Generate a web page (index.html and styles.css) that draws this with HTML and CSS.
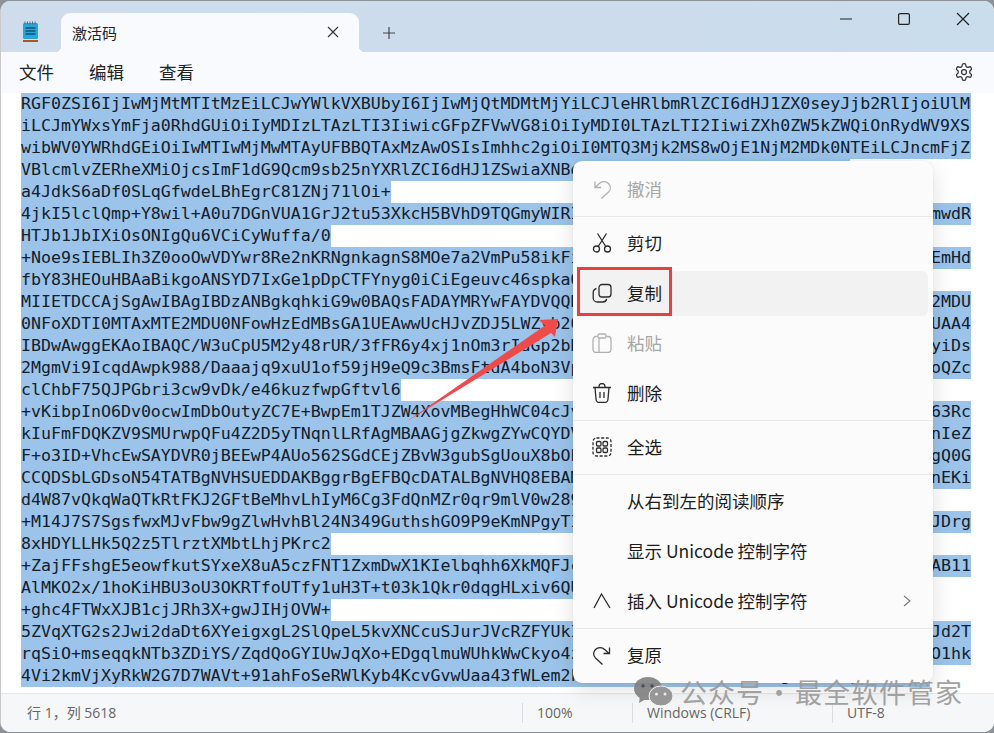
FILE: index.html
```html
<!DOCTYPE html>
<html lang="zh-CN">
<head>
<meta charset="utf-8">
<title>激活码 - 记事本</title>
<link rel="stylesheet" href="styles.css">
</head>
<body>
<div class="window">
  <header class="titlebar">
    <div class="appicon">
      <svg width="20" height="24" viewBox="0 0 20 24"><rect x="2" y="3" width="15" height="16" rx="1.5" fill="#2aa5d8"/><path d="M4 1.5v3M6.5 1.5v3M9 1.5v3M11.5 1.5v3M14 1.5v3" stroke="#3d6f8f" stroke-width="1"/><path d="M4.5 8h10M4.5 11h10M4.5 14h10" stroke="#0f5478" stroke-width="1.4"/><rect x="2" y="20" width="15" height="2" fill="#b0531d"/></svg>
    </div>
    <div class="tab">
      <span class="tabtitle">激活码</span>
      <svg class="tabclose" width="12" height="12" viewBox="0 0 12 12"><path d="M1 1l10 10M11 1L1 11" stroke="#333" stroke-width="1.1"/></svg>
    </div>
    <div class="newtab">
      <svg width="14" height="14" viewBox="0 0 14 14"><path d="M7 1v12M1 7h12" stroke="#444" stroke-width="1.2"/></svg>
    </div>
    <div class="controls">
      <div class="ctl"><svg width="14" height="14" viewBox="0 0 14 14"><path d="M1 7h12" stroke="#222" stroke-width="1.2"/></svg></div>
      <div class="ctl"><svg width="14" height="14" viewBox="0 0 14 14"><rect x="1.6" y="1.6" width="10.8" height="10.8" rx="1.5" fill="none" stroke="#222" stroke-width="1.2"/></svg></div>
      <div class="ctl"><svg width="14" height="14" viewBox="0 0 14 14"><path d="M1 1l12 12M13 1L1 13" stroke="#222" stroke-width="1.2"/></svg></div>
    </div>
  </header>
  <nav class="toolbar">
    <span class="menuname">文件</span>
    <span class="menuname">编辑</span>
    <span class="menuname">查看</span>
    <svg class="gear" width="20" height="20" viewBox="0 0 24 24" fill="none" stroke="#333" stroke-width="1.5"><path d="M12.22 2h-.44a2 2 0 0 0-2 2v.18a2 2 0 0 1-1 1.73l-.43.25a2 2 0 0 1-2 0l-.15-.08a2 2 0 0 0-2.73.73l-.22.38a2 2 0 0 0 .73 2.73l.15.1a2 2 0 0 1 1 1.72v.51a2 2 0 0 1-1 1.74l-.15.09a2 2 0 0 0-.73 2.73l.22.38a2 2 0 0 0 2.73.73l.15-.08a2 2 0 0 1 2 0l.43.25a2 2 0 0 1 1 1.73V20a2 2 0 0 0 2 2h.44a2 2 0 0 0 2-2v-.18a2 2 0 0 1 1-1.73l.43-.25a2 2 0 0 1 2 0l.15.08a2 2 0 0 0 2.73-.73l.22-.39a2 2 0 0 0-.73-2.73l-.15-.08a2 2 0 0 1-1-1.74v-.5a2 2 0 0 1 1-1.74l.15-.09a2 2 0 0 0 .73-2.73l-.22-.38a2 2 0 0 0-2.73-.73l-.15.08a2 2 0 0 1-2 0l-.43-.25a2 2 0 0 1-1-1.73V4a2 2 0 0 0-2-2z"/><circle cx="12" cy="12" r="3"/></svg>
  </nav>
  <main class="editor">
    <div class="line full"><span>RGF0ZSI6IjIwMjMtMTItMzEiLCJwYWlkVXBUbyI6IjIwMjQtMDMtMjYiLCJleHRlbmRlZCI6dHJ1ZX0seyJjb2RlIjoiUlM</span></div>
    <div class="line full"><span>iLCJmYWxsYmFja0RhdGUiOiIyMDIzLTAzLTI3IiwicGFpZFVwVG8iOiIyMDI0LTAzLTI2IiwiZXh0ZW5kZWQiOnRydWV9XS</span></div>
    <div class="line full"><span>wibWV0YWRhdGEiOiIwMTIwMjMwMTAyUFBBQTAxMzAwOSIsImhhc2giOiI0MTQ3Mjk2MS8wOjE1NjM2MDk0NTEiLCJncmFjZ</span></div>
    <div class="line"><span class="sel">VBlcmlvZERheXMiOjcsImF1dG9Qcm9sb25nYXRlZCI6dHJ1ZSwiaXNBdXRvUHJvbG9uZ2F0ZWQiOnRydWV9</span></div>
    <div class="line"><span class="sel">a4JdkS6aDf0SLqGfwdeLBhEgrC81ZNj71lOi+</span></div>
    <div class="line full"><span>4jkI5lclQmp+Y8wil+A0u7DGnVUA1GrJ2tu53XkcH5BVhD9TQGmyWIRIx2k</span><span>mwdR</span></div>
    <div class="line"><span class="sel">HTJb1JbIXiOsONIgQu6VCiCyWuffa/0</span></div>
    <div class="line full"><span>+Noe9sIEBLIh3Z0ooOwVDYwr8Re2nKRNgnkagnS8MOe7a2VmPu58ikFiT5xq</span><span>EmHd</span></div>
    <div class="line"><span class="sel">fbY83HEOuHBAaBikgoANSYD7IxGe1pDpCTFYnyg0iCiEgeuvc46spkaQ2Lx7vT1m</span></div>
    <div class="line full"><span>MIIETDCCAjSgAwIBAgIBDzANBgkqhkiG9w0BAQsFADAYMRYwFAYDVQQDDA1KZXQ</span><span>2MDU</span></div>
    <div class="line full"><span>0NFoXDTI0MTAxMTE2MDU0NFowHzEdMBsGA1UEAwwUcHJvZDJ5LWZyb20tMjAyM</span><span>UAA4</span></div>
    <div class="line full"><span>IBDwAwggEKAoIBAQC/W3uCpU5M2y48rUR/3fFR6y4xj1nOm3rIuGp2bRkT9qZ</span><span>yiDs</span></div>
    <div class="line full"><span>2MgmVi9IcqdAwpk988/Daaajq9xuU1of59jH9eQ9c3BmsFtdA4boN3VpxW7k</span><span>oQZc</span></div>
    <div class="line"><span class="sel">clChbF75QJPGbri3cw9vDk/e46kuzfwpGftvl6</span></div>
    <div class="line full"><span>+vKibpInO6Dv0ocwImDbOutyZC7E+BwpEm1TJZW4XovMBegHhWC04cJvYk2</span><span>63Rc</span></div>
    <div class="line full"><span>kIuFmFDQKZV9SMUrwpQFu4Z2D5yTNqnlLRfAgMBAAGjgZkwgZYwCQYDVR0TBA</span><span>nIeZ</span></div>
    <div class="line full"><span>F+o3ID+VhcEwSAYDVR0jBEEwP4AUo562SGdCEjZBvW3gubSgUouX8bOhHKQa</span><span>gQ0G</span></div>
    <div class="line full"><span>CCQDSbLGDsoN54TATBgNVHSUEDDAKBggrBgEFBQcDATALBgNVHQ8EBAMCBaAw</span><span>nEKi</span></div>
    <div class="line"><span class="sel">d4W87vQkqWaQTkRtFKJ2GFtBeMhvLhIyM6Cg3FdQnMZr0qr9mlV0w289sBkPz</span></div>
    <div class="line full"><span>+M14J7S7SgsfwxMJvFbw9gZlwHvhBl24N349GuthshGO9P9eKmNPgyTIx5R</span><span>JDrg</span></div>
    <div class="line"><span class="sel">8xHDYLLHk5Q2z5TlrztXMbtLhjPKrc2</span></div>
    <div class="line full"><span>+ZajFFshgE5eowfkutSYxeX8uA5czFNT1ZxmDwX1KIelbqhh6XkMQFJcT2w</span><span>AB11</span></div>
    <div class="line"><span class="sel">AlMKO2x/1hoKiHBU3oU3OKRTfoUTfy1uH3T+t03k1Qkr0dqgHLxiv6QUvN3b</span></div>
    <div class="line"><span class="sel">+ghc4FTWxXJB1cjJRh3X+gwJIHjOVW+</span></div>
    <div class="line full"><span>5ZVqXTG2s2Jwi2daDt6XYeigxgL2SlQpeL5kvXNCcuSJurJVcRZFYUkIo8m</span><span>Jd2T</span></div>
    <div class="line full"><span>rqSiO+mseqqkNTb3ZDiYS/ZqdQoGYIUwJqXo+EDgqlmuWUhkWwCkyo4zPd7</span><span>O1hk</span></div>
    <div class="line"><span class="sel">4Vi2kmVjXyRkW2G7D7WAVt+91ahFoSeRWlKyb4KcvGvwUaa43fWLem2kTxQ8vNp3sYf1ZbMc6JhRgA0oLu5yEiD9tKn</span></div>
  </main>
  <footer class="status">
    <div class="cell first">行 1，列 5618</div>
    <div class="cell zoom"><span>100%</span></div>
    <div class="cell eol"><span>Windows (CRLF)</span></div>
    <div class="cell enc"><span>UTF-8</span></div>
  </footer>
</div>

<div class="menu">
  <div class="item off"><svg class="ic" viewBox="0 0 20 20"><path d="M3 2.5v6h6M3.2 8.5L7 4.7C10 2 14 2 16.5 4.5 19 7 19 10.5 16.5 13L9.5 19.5"/></svg><span>撤消</span></div>
  <div class="sep"></div>
  <div class="item"><svg class="ic" viewBox="0 0 20 20"><circle cx="4.5" cy="16" r="3"/><circle cx="15.5" cy="16" r="3"/><path d="M6.2 13.5L14.5.5M13.8 13.5L5.5.5"/></svg><span>剪切</span></div>
  <div class="item hover"><svg class="ic" viewBox="0 0 20 20"><rect x="7" y="1.5" width="12" height="12.5" rx="3"/><path d="M4.5 5.5C2.5 6 1.2 7.5 1.2 9.5v5.5c0 2.3 1.9 4 4 4h5.5c2 0 3.6-1.2 4-3"/></svg><span>复制</span></div>
  <div class="item off"><svg class="ic" viewBox="0 0 20 20"><path d="M5.5 3.5H4a3 3 0 0 0-3 3V17a3 3 0 0 0 3 2.5h12a3 3 0 0 0 3-3V6.5a3 3 0 0 0-3-3h-1.500"/><rect x="6" y="1" width="8" height="4" rx="1.500"/><path d="M7 5v14.500"/></svg><span>粘贴</span></div>
  <div class="item"><svg class="ic" viewBox="0 0 20 20"><path d="M1 4.500h18M7 4.500V3.500a3 3 0 0 1 6 0v1M3 4.500l1 11.500a3.500 3.500 0 0 0 3.500 3.500h5a3.500 3.500 0 0 0 3.500-3.500l1-11.500M8 9v6M12 9v6"/></svg><span>删除</span></div>
  <div class="sep"></div>
  <div class="item"><svg class="ic" viewBox="0 0 20 20"><rect x="1" y="1" width="18" height="18" rx="3.500" stroke-dasharray="3 1.700"/><rect x="4.500" y="4.500" width="4.500" height="4.500" rx="1.200"/><rect x="11" y="4.500" width="4.500" height="4.500" rx="1.200"/><rect x="4.500" y="11" width="4.500" height="4.500" rx="1.200"/><rect x="11" y="11" width="4.500" height="4.500" rx="1.200"/></svg><span>全选</span></div>
  <div class="sep"></div>
  <div class="item"><span class="noicon"></span><span>从右到左的阅读顺序</span></div>
  <div class="item"><span class="noicon"></span><span>显示 Unicode 控制字符</span></div>
  <div class="item"><svg class="ic" viewBox="0 0 20 20"><path d="M2 17L9.500 3 18 17"/></svg><span>插入 Unicode 控制字符</span><svg class="chev" width="8" height="12" viewBox="0 0 8 12"><path d="M1 1l6 5-6 5"/></svg></div>
  <div class="sep"></div>
  <div class="item"><svg class="ic" viewBox="0 0 20 20"><path d="M17.500 2.500v6h-6M17 8.500L13 4.700C10 2 6 2 3.500 4.500 1 7 1 10.500 3.500 13l7 6.500"/></svg><span>复原</span></div>
</div>

<div class="redbox"></div>
<svg class="arrow" width="994" height="733" viewBox="0 0 994 733"><polygon points="558,319 539,320 545,325.500 406,422 551,333 555,337"/></svg>

<div class="watermark">
  <svg width="40" height="30" viewBox="0 0 40 30"><ellipse cx="14" cy="11.500" rx="14" ry="11.500" fill="#808080"/><path d="M6 19l-1 7 7-4z" fill="#808080"/><ellipse cx="27" cy="19" rx="12" ry="10" fill="#8e8e8e" stroke="#f6f7f9" stroke-width="1"/><circle cx="22.500" cy="17" r="1.500" fill="#eee"/><circle cx="31" cy="17" r="1.500" fill="#eee"/><circle cx="9" cy="9" r="1.700" fill="#444"/><circle cx="18" cy="9" r="1.700" fill="#444"/></svg>
  <span class="wmtext">公众号 · 最全软件管家</span>
</div>
</body>
</html>
```

FILE: styles.css
```css
* { box-sizing: border-box; }
html, body { margin: 0; padding: 0; }
body {
  width: 994px;
  height: 733px;
  overflow: hidden;
  position: relative;
  background: #8d9299;
  font-family: "Noto Sans CJK SC", "Noto Sans", sans-serif;
  color: #1b1b1b;
}
.window {
  width: 994px;
  height: 731px;
  margin-top: 1px;
  display: flex;
  flex-direction: column;
  border-radius: 10px;
  overflow: hidden;
  border-left: 1px solid #c9c9c9;
  background: #fff;
}
.titlebar {
  height: 51px;
  flex: none;
  display: flex;
  background: linear-gradient(90deg, #cedcec 0%, #cddcec 60%, #c9dded 100%);
}
.appicon {
  width: 60px;
  display: flex;
  align-items: center;
  justify-content: center;
  padding-top: 10px;
}
.tab {
  position: relative;
  width: 298px;
  height: 39px;
  margin-top: 12px;
  padding: 0 20px 1px 11px;
  display: flex;
  align-items: center;
  justify-content: space-between;
  background: #f8fafd;
  border-radius: 9px 9px 0 0;
}
.tab::before, .tab::after {
  content: "";
  position: absolute;
  bottom: 0;
  width: 6px;
  height: 6px;
}
.tab::before { left: -6px; background: radial-gradient(circle at 0 0, transparent 6px, #f8fafd 6.5px); }
.tab::after { right: -6px; background: radial-gradient(circle at 100% 0, transparent 6px, #f8fafd 6.5px); }
.tabtitle { font-size: 15px; color: #222; }
.newtab {
  width: 60px;
  display: flex;
  align-items: center;
  justify-content: center;
  padding-top: 13px;
}
.controls { margin-left: auto; display: flex; padding-right: 2px; }
.ctl {
  width: 58.5px;
  height: 36px;
  display: flex;
  align-items: center;
  justify-content: center;
}
.toolbar {
  height: 41px;
  flex: none;
  display: flex;
  align-items: center;
  gap: 35px;
  padding: 0 20px 1px 18px;
  background: #f8fafd;
}
.menuname { font-size: 17.500px; line-height: 1; color: #222; }
.gear { margin-left: auto; }
.editor {
  flex: 1;
  min-height: 0;
  padding-left: 20px;
  background: #fff;
  font-family: "DejaVu Sans Mono", monospace;
  font-size: 16.600px;
  line-height: 22px;
  color: #10202e;
  overflow: hidden;
}
.line { height: 22px; white-space: pre; }
.sel { display: inline-block; height: 22px; background: #9cc4ea; }
.full {
  width: 950px;
  display: flex;
  justify-content: space-between;
  background: #9cc4ea;
}
.status {
  height: 39px;
  flex: none;
  display: flex;
  align-items: center;
  border-top: 1px solid #e6e7e9;
  background: #f6f7f9;
  font-family: "Open Sans", "Noto Sans CJK SC", sans-serif;
  font-size: 14px;
  color: #666;
}
.cell { height: 20px; line-height: 20px; padding-left: 14px; }
.cell + .cell { border-left: 1px solid #dcdcdc; }
.first { width: 521px; padding-left: 26px; }
.zoom { width: 110px; }
.eol { width: 200px; }
.enc { width: 150px; }

.menu {
  position: absolute;
  left: 573px;
  top: 161px;
  width: 360px;
  height: 522px;
  padding: 3px 0;
  display: flex;
  flex-direction: column;
  background: #fbfbfb;
  border-radius: 9px;
  box-shadow: 0 6px 22px rgba(0, 0, 0, 0.13), 0 0 2px rgba(0, 0, 0, 0.08);
}
.item {
  height: 45px;
  flex: none;
  margin: 2.500px 5px;
  padding-left: 14px;
  display: flex;
  align-items: center;
  gap: 15px;
  border-radius: 6px;
  font-size: 17.500px;
  color: #1c1c1c;
}
.item > span:last-of-type { position: relative; top: -1px; }
.item.hover { background: #f2f2f2; }
.item.off { color: #a6a6a6; }
.ic {
  width: 20px;
  height: 20px;
  flex: none;
  fill: none;
  stroke: #2b2b2b;
  stroke-width: 1.300;
}
.off .ic { stroke: #b0b0b0; }
.noicon { width: 20px; flex: none; }
.chev { margin-left: auto; margin-right: 17px; fill: none; stroke: #777; stroke-width: 1.100; }
.sep { height: 1px; flex: none; margin: 1.500px 0; background: #e9e9e9; }

.redbox {
  position: absolute;
  left: 577px;
  top: 267px;
  width: 95px;
  height: 49px;
  border: 3px solid #e9403f;
}
.arrow { position: absolute; left: 0; top: 0; pointer-events: none; }
.arrow polygon { fill: #ee4b4b; }
.watermark {
  position: absolute;
  left: 634px;
  top: 677px;
  display: flex;
  align-items: center;
  gap: 6px;
  opacity: 0.9;
}
.wmtext {
  font-size: 27px;
  line-height: 30px;
  letter-spacing: 1px;
  word-spacing: -5.500px;
  color: #999;
  white-space: nowrap;
}
```
